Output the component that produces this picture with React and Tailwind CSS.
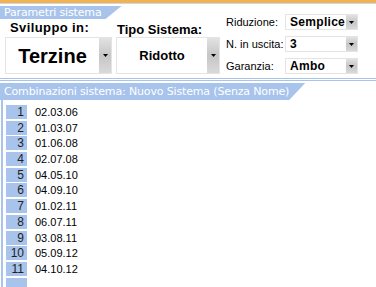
import React from 'react'

const ROWS = [
  '02.03.06',
  '01.03.07',
  '01.06.08',
  '02.07.08',
  '04.05.10',
  '04.09.10',
  '01.02.11',
  '06.07.11',
  '03.08.11',
  '05.09.12',
  '04.10.12',
]

const SMALL_COMBOS = [
  { label: 'Riduzione:', value: 'Semplice' },
  { label: 'N. in uscita:', value: '3' },
  { label: 'Garanzia:', value: 'Ambo' },
]

function Arrow() {
  return (
    <svg width="5" height="3" viewBox="0 0 5 3" aria-hidden="true">
      <path d="M0 0h5L2.5 3z" fill="#000" />
    </svg>
  )
}

function DropButton({ className }) {
  return (
    <div
      className={`flex items-center justify-center bg-gradient-to-b from-[#e2e2e2] via-[#c6c6c6] to-[#d9d9d9] ${className}`}
    >
      <Arrow />
    </div>
  )
}

function Tab({ children, className }) {
  return (
    <div
      className={`w-fit bg-[#a8c4ec] pl-[4px] pr-[16px] text-white font-['DejaVu_Sans',sans-serif] text-[11px] tracking-[-0.15px] [clip-path:polygon(0_0,100%_0,calc(100%-16px)_100%,0_100%)] ${className}`}
    >
      {children}
    </div>
  )
}

export default function App() {
  return (
    <div className="h-[287px] w-[376px] overflow-hidden bg-white font-['Liberation_Sans',Arial,sans-serif] text-black">
      <div className="h-[3px] bg-[#f4b24f]" />
      <div className="h-px bg-[#c4d8f3]" />

      <div className="flex h-[74px]">
        <div className="w-[222px]">
          <Tab className="mt-[2px] h-[13px] pr-[20px] leading-[13px]">Parametri sistema</Tab>
          <div className="flex gap-[4px] pl-[5px]">
            <div className="w-[107px]">
              <p className="mt-[1px] pl-[5px] text-[13px] font-bold leading-[15px] tracking-[0.4px]">Sviluppo in:</p>
              <div className="mt-[2px] flex h-[37px] border border-[#e4e4e4]">
                <div className="flex flex-1 items-center justify-center text-[20px] font-bold">Terzine</div>
                <DropButton className="w-[12px]" />
              </div>
            </div>
            <div className="w-[104px]">
              <p className="mt-[3px] pl-[1px] text-[13px] font-bold leading-[15px]">Tipo Sistema:</p>
              <div className="flex h-[37px] border border-[#e4e4e4]">
                <div className="flex flex-1 items-center justify-center text-[13px] font-bold">Ridotto</div>
                <DropButton className="w-[12px]" />
              </div>
            </div>
          </div>
        </div>

        <div className="ml-[4px] flex flex-col gap-[6px] pt-[10px]">
          {SMALL_COMBOS.map((combo) => (
            <div key={combo.label} className="flex h-[16px] items-center">
              <span className="w-[59px] text-[11px]">{combo.label}</span>
              <div className="flex h-[16px] w-[73px] border border-[#e4e4e4]">
                <span className="flex-1 pl-[4px] text-[12px] font-bold leading-[14px] tracking-[0.3px]">
                  {combo.value}
                </span>
                <DropButton className="w-[11px]" />
              </div>
            </div>
          ))}
        </div>
      </div>

      <div className="h-px bg-[#a8c4ec]" />
      <div className="h-px bg-white" />
      <div className="h-px bg-[#a8c4ec]" />

      <Tab className="mt-[2px] h-[17px] leading-[17px]">
        Combinazioni sistema: Nuovo Sistema (Senza Nome)
      </Tab>

      <div className="ml-[1px] h-full border-l-2 border-[#a8c4ec] pl-[3px] pt-[5px]">
        {[...ROWS, ''].map((date, i) => (
          <div key={i} className="flex h-[15.7px] items-start">
            <div className="h-[14px] w-[21px] bg-[#a8c4ec] pr-[3px] text-right text-[12px] leading-[14px] text-[#222]">
              {date ? i + 1 : ''}
            </div>
            <span className="ml-[8px] text-[11px] leading-[14px]">{date}</span>
          </div>
        ))}
      </div>
    </div>
  )
}
